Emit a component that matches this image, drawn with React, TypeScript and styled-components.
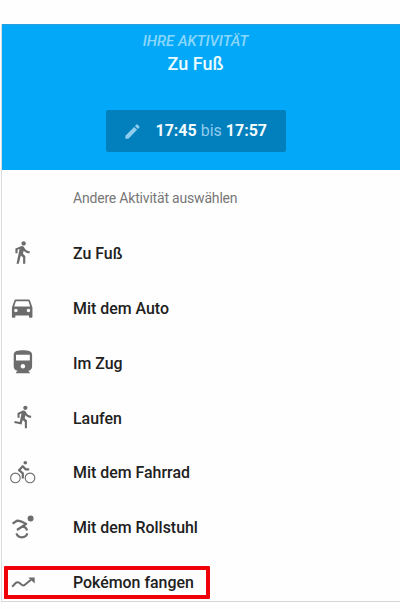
import React from "react";
import styled, { createGlobalStyle } from "styled-components";

const GlobalStyle = createGlobalStyle`
  *, *::before, *::after { box-sizing: border-box; }
  body { margin: 0; background: #fefefe; font-family: Roboto, sans-serif; }
`;

const Screen = styled.main`
  height: 609px;
  padding: 24px 0 0 1px;
  overflow: hidden;
`;

const Panel = styled.section`
  height: 578px;
  border-left: 1px solid #d9dde1;
  border-bottom: 1px solid #d5d7d9;
`;

const Header = styled.header`
  height: 146px;
  padding: 8px 11px 0 0;
  display: flex;
  flex-direction: column;
  align-items: center;
  background: #03a9f8;
  border-top: 1px solid #2b9fdd;
`;

const Caption = styled.div`
  font-size: 14.9px;
  line-height: 17px;
  font-style: italic;
  font-weight: 500;
  color: #8bd7fb;
`;

const Current = styled.h1`
  margin: 2px 0 0;
  font-size: 18px;
  line-height: 24px;
  font-weight: 500;
  color: #e9fbff;
`;

const TimeButton = styled.button`
  width: 180px;
  height: 42px;
  margin: 34px 0 0;
  padding: 0 0 0 17px;
  display: flex;
  align-items: center;
  gap: 14px;
  border: 0;
  border-radius: 2px;
  background: #027fbd;
  color: #8fcdec;
  font: 400 16px/20px Roboto, sans-serif;
  white-space: nowrap;

  b { color: #f2fcff; font-weight: 700; }
`;

const Hint = styled.p`
  height: 56.7px;
  margin: 0;
  padding-left: 71px;
  font-size: 14px;
  letter-spacing: -0.19px;
  line-height: 56px;
  color: #777;
`;

const List = styled.ul`
  margin: 0;
  padding: 0;
  list-style: none;
`;

const Row = styled.li`
  height: 54.83px;
  padding-left: 7px;
  display: flex;
  align-items: center;
  gap: 36px;
  font-size: 15.92px;
  line-height: 20px;
  font-weight: 500;
  color: #202020;
  position: relative;
`;

const Icon = styled.svg`
  width: 28px;
  height: 28px;
  flex: none;
  color: #6c6c6c;
  fill: currentColor;
`;

const Highlight = styled.span`
  position: absolute;
  left: 2px;
  top: 10.4px;
  width: 206px;
  height: 33px;
  border: 4px solid #f00009;
  border-radius: 1px;
`;

const stroke = {
  fill: "none",
  stroke: "currentColor",
  strokeLinecap: "butt" as const,
  strokeLinejoin: "round" as const,
};

const activities = [
  {
    label: "Zu Fuß",
    icon: (
      <path transform="translate(-.2 -.2) scale(1.1 1.04)" d="M13.5 5.5c1.1 0 2-.9 2-2s-.9-2-2-2-2 .9-2 2 .9 2 2 2zM9.8 8.9L7 23h2.1l1.8-8 2.1 2v6h2v-7.5l-2.1-2 .6-3C14.8 12 16.8 13 19 13v-2c-1.9 0-3.5-1-4.3-2.4l-1-1.6c-.4-.6-1-1-1.7-1-.3 0-.5.1-.8.1L6 8.3V13h2V9.6l1.8-.7" />
    ),
  },
  {
    label: "Mit dem Auto",
    icon: (
      <path transform="translate(-.5 -1.1) scale(1.14)" d="M18.92 6.01C18.72 5.42 18.16 5 17.5 5h-11c-.66 0-1.21.42-1.42 1.01L3 12v8c0 .55.45 1 1 1h1c.55 0 1-.45 1-1v-1h12v1c0 .55.45 1 1 1h1c.55 0 1-.45 1-1v-8l-2.08-5.99zM6.5 16c-.83 0-1.5-.67-1.5-1.5S5.67 13 6.5 13s1.5.67 1.5 1.5S7.33 16 6.5 16zm11 0c-.83 0-1.5-.67-1.5-1.5s.67-1.5 1.5-1.5 1.5.67 1.5 1.5-.67 1.5-1.5 1.5zM5 11l1.5-4.5h11L19 11H5z" />
    ),
  },
  {
    label: "Im Zug",
    icon: (
      <path transform="translate(.1 -1) scale(1.15)" d="M4 15.5C4 17.43 5.57 19 7.5 19L6 20.5v.5h12v-.5L16.5 19c1.93 0 3.5-1.57 3.5-3.5V5c0-3.5-3.58-4-8-4s-8 .5-8 4v10.5zm8 1.5c-1.1 0-2-.9-2-2s.9-2 2-2 2 .9 2 2-.9 2-2 2zm6-7H6V5h12v5z" />
    ),
  },
  {
    label: "Laufen",
    icon: (
      <path transform="translate(2.2 -.8) scale(1.05)" d="M13.49 5.48c1.1 0 2-.9 2-2s-.9-2-2-2-2 .9-2 2 .9 2 2 2zm-3.6 13.9l1-4.4 2.1 2v6h2v-7.5l-2.1-2 .6-3c1.3 1.5 3.3 2.5 5.5 2.5v-2c-1.9 0-3.5-1-4.3-2.4l-1-1.6c-.4-.6-1-1-1.7-1-.3 0-.5.1-.8.1l-5.2 2.2v4.7h2v-3.4l1.8-.7-1.6 8.1-4.9-1-.4 2 7 1.4z" />
    ),
  },
  {
    label: "Mit dem Fahrrad",
    icon: (
      <>
        <circle cx="6.4" cy="18.9" r="4.8" {...stroke} strokeWidth="1.1" />
        <circle cx="21" cy="18.9" r="4.8" {...stroke} strokeWidth="1.1" />
        <circle cx="16.3" cy="3.7" r="1.8" />
        <path d="M20.2 10.4h-3.4l-3-3.2-3.8 4 3.8 3.2v5.2" {...stroke} strokeWidth="2.2" />
      </>
    ),
  },
  {
    label: "Mit dem Rollstuhl",
    icon: (
      <>
        <circle cx="21.6" cy="4.5" r="3" />
        <path d="M3.6 9.6l4.4-2.9c3 0 6 1.5 9.2 3.2l-9.2 6.1" {...stroke} strokeWidth="2.3" />
        <path d="M13 12.6c2.8 0 4.6 1.5 5 3.9M7.4 19.4c1.8 5.2 9 5.2 11 0" {...stroke} strokeWidth="2.2" />
      </>
    ),
  },
  {
    label: "Pokémon fangen",
    highlighted: true,
    icon: (
      <>
        <path d="M3.2 17.7l3.2-3.4c1.5-1.5 2.7-1.5 4.2-.2l1.7 1.5c1.4 1.2 2.6 1.1 3.9-.1l5.8-4.7" {...stroke} strokeWidth="2" />
        <path d="M19.3 8.6h6.4v5.9z" />
      </>
    ),
  },
];

export default function App() {
  return (
    <>
      <GlobalStyle />
      <Screen>
        <Panel>
          <Header>
            <Caption>IHRE AKTIVITÄT</Caption>
            <Current>Zu Fuß</Current>
            <TimeButton>
              <svg width="19" height="19" viewBox="0 0 24 24" fill="currentColor">
                <path d="M3 17.25V21h3.75L17.81 9.94l-3.75-3.75L3 17.25zM20.71 7.04a1 1 0 0 0 0-1.41l-2.34-2.34a1 1 0 0 0-1.41 0l-1.83 1.83 3.75 3.75 1.83-1.83z" />
              </svg>
              <span><b>17:45</b> bis <b>17:57</b></span>
            </TimeButton>
          </Header>
          <Hint>Andere Aktivität auswählen</Hint>
          <List>
            {activities.map(({ label, icon, highlighted }) => (
              <Row key={label}>
                <Icon viewBox="0 0 28 28">{icon}</Icon>
                {label}
                {highlighted && <Highlight />}
              </Row>
            ))}
          </List>
        </Panel>
      </Screen>
    </>
  );
}
